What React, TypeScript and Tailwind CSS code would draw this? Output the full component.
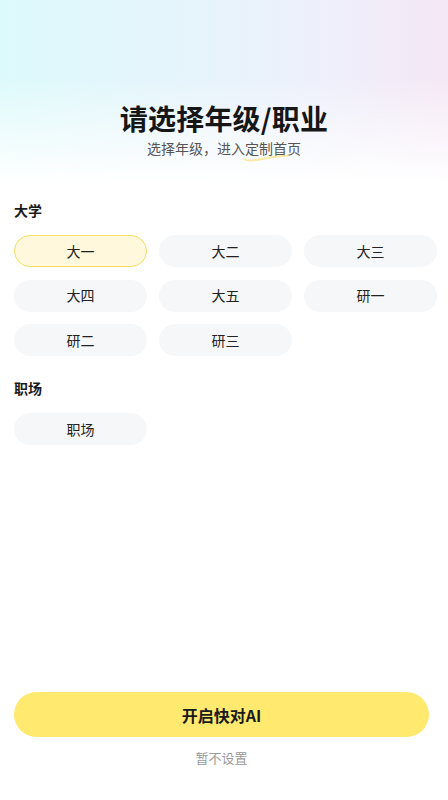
import { useState } from "react";

const groups = [
  { title: "大学", items: ["大一", "大二", "大三", "大四", "大五", "研一", "研二", "研三"] },
  { title: "职场", items: ["职场"] },
];

export default function App() {
  const [picked, setPicked] = useState("大一");

  return (
    <div className="flex h-[800px] w-full flex-col bg-white font-['Noto_Sans_CJK_SC','Noto_Sans',sans-serif] text-[#1a1a1a]">
      {/* Header with soft gradient */}
      <div className="flex h-[192px] flex-col items-center bg-[linear-gradient(180deg,rgba(255,255,255,0)_40%,#ffffff_96%),linear-gradient(90deg,#ddfafb_0%,#e5f4fb_40%,#edf0fb_70%,#f5e7f5_100%)] pt-[100px]">
        <h1 className="text-[28px] font-bold leading-[36px] tracking-[0.2px] text-[#161616]">请选择年级/职业</h1>
        <p className="relative mt-[2px] text-[14px] leading-[20px] text-[#555]">
          选择年级，进入定制首页
          <svg className="absolute left-[96px] top-[15px] h-[9px] w-[46px]" viewBox="0 0 46 9" fill="none">
            <path d="M1 6 C 4 8, 8 8, 16 6.5 S 36 3, 45 2.5" stroke="#f9e58c" strokeWidth="2" strokeLinecap="round" opacity="0.8" />
          </svg>
        </p>
      </div>

      {/* Options */}
      <div className="flex flex-col gap-[22px] pl-[14px] pr-[11px] pt-[8px]">
        {groups.map((g) => (
          <section key={g.title}>
            <h2 className="text-[14px] font-bold leading-[20px] text-[#1a1a1a]">{g.title}</h2>
            <div className="mt-[15px] grid grid-cols-3 gap-x-[12px] gap-y-[12.5px]">
              {g.items.map((item) => {
                const on = item === picked;
                return (
                  <button
                    key={item}
                    onClick={() => setPicked(item)}
                    className={
                      on
                        ? "h-[32px] rounded-full border border-[#f6dd63] bg-[#fff8dd] text-[14px] text-[#222]"
                        : "h-[32px] rounded-full border border-transparent bg-[#f6f7f9] text-[14px] text-[#222]"
                    }
                  >
                    {item}
                  </button>
                );
              })}
            </div>
          </section>
        ))}
      </div>

      {/* Bottom actions */}
      <div className="mt-auto flex flex-col items-stretch pb-[32px] pl-[14px] pr-[19px]">
        <button className="h-[45px] rounded-full bg-[#ffe96f] text-[16px] font-bold text-[#1a1a1a]">开启快对AI</button>
        <button className="mt-[11px] h-[20px] text-[13px] leading-[20px] text-[#9a9a9a]">暂不设置</button>
      </div>
    </div>
  );
}
